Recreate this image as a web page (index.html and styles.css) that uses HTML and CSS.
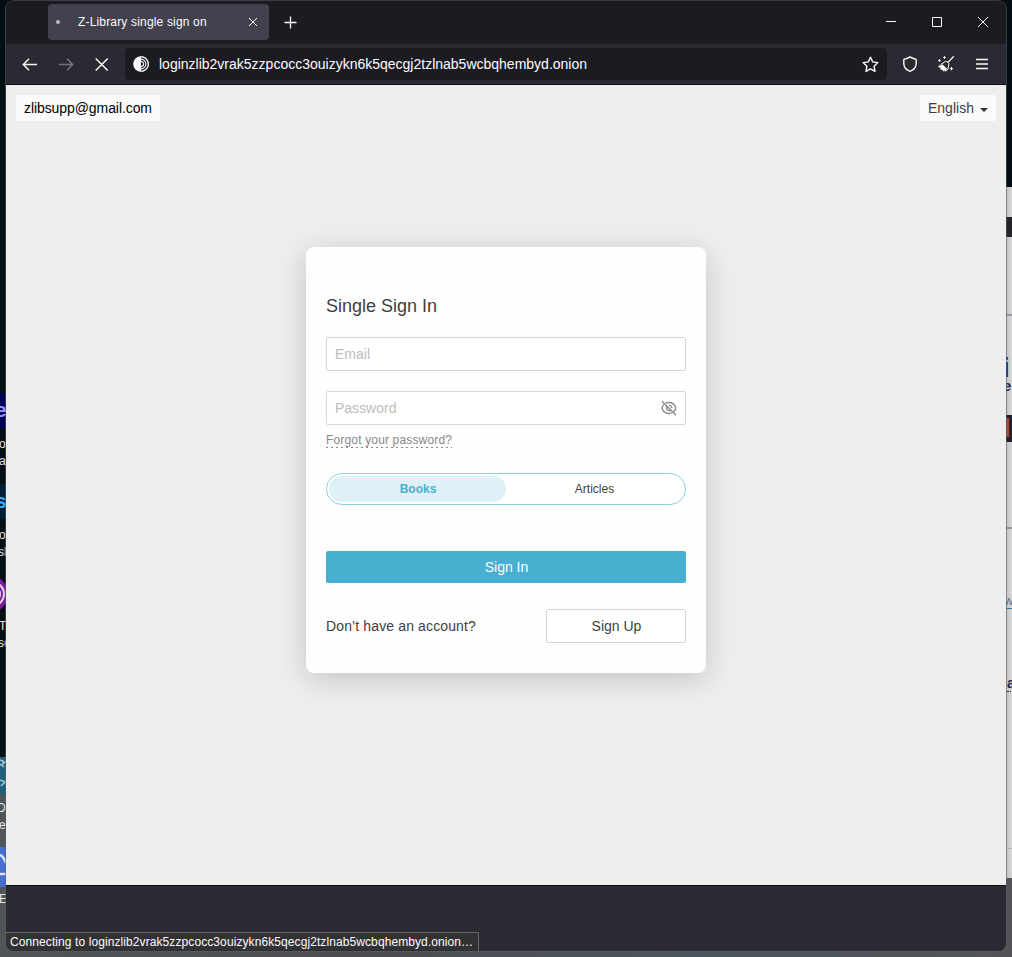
FILE: index.html
```html
<!DOCTYPE html>
<html lang="en">
<head>
<meta charset="utf-8">
<title>Z-Library single sign on</title>
<link rel="stylesheet" href="styles.css">
</head>
<body>
<div class="desktop" aria-hidden="true">
  <div class="wallpaper-low"></div>
  <span class="icon icon-ae">e</span>
  <span class="label label-1">o</span><span class="label label-2">a</span>
  <span class="icon icon-ps">s</span>
  <span class="label label-3">o</span><span class="label label-4">sl</span>
  <svg class="tor" width="6" height="38" viewBox="0 0 6 38"><circle cx="-11" cy="19" r="19" fill="#7b199b" stroke="none"/><circle cx="-8" cy="19" r="12" fill="none" stroke="#e4cfec" stroke-width="2"/><circle cx="-8" cy="19" r="8" fill="none" stroke="#e4cfec" stroke-width="2"/></svg>
  <span class="label label-5">T</span><span class="label label-6">se</span>
  <svg class="teal" width="6" height="38" viewBox="0 0 6 38"><rect width="6" height="38" fill="#21617c" stroke="none"/><path d="M0 3l3 1v3l3-3M0 7l4 3M0 23l5 2M1 29l5-5" fill="none" stroke="#a5cbd5" stroke-width="1.500"/></svg>
  <span class="label label-7">D</span><span class="label label-8">e</span>
  <svg class="blue" width="6" height="40" viewBox="0 0 6 40"><rect width="6" height="40" fill="#466fd3" stroke="none"/><path d="M0 8q3 1 6 8M0 27h6" fill="none" stroke="#dbe3f7" stroke-width="2.500"/></svg>
  <span class="label label-9">E</span>
  <div class="behind">
    <i class="bar"></i><i class="rule rule-1"></i>
    <span class="frag frag-i">i</span><span class="frag frag-e">e</span>
    <span class="dark">d</span><i class="rule rule-2"></i>
    <span class="frag frag-w">w</span><span class="frag frag-a">a</span><i class="rule rule-3"></i>
  </div>
</div>

<div class="window">
  <header class="tabbar">
    <div class="tab"><i class="dot"></i><span class="tab-title">Z-Library single sign on</span>
      <svg width="10" height="10" viewBox="0 0 10 10"><path d="M1 1l8 8M9 1l-8 8"/></svg>
    </div>
    <svg class="plus" width="13" height="13" viewBox="0 0 13 13"><path d="M6.500 .5v12M.5 6.500h12"/></svg>
    <div class="controls">
      <svg width="10" height="10" viewBox="0 0 10 10"><path d="M0 4.500h10" stroke-width="1"/></svg>
      <svg width="10" height="10" viewBox="0 0 10 10"><path d="M.5 .5h9v9h-9z"/></svg>
      <svg width="10" height="10" viewBox="0 0 10 10"><path d="M0 0l10 10M10 0L0 10"/></svg>
    </div>
  </header>
  <nav class="toolbar">
    <svg width="16" height="16" viewBox="0 0 16 16"><path d="M15 8.500H1.500M7 2.800L1.300 8.500 7 14.200"/></svg>
    <svg class="disabled" width="16" height="16" viewBox="0 0 16 16"><path d="M1 8.500h13.500M9 2.800l5.700 5.700L9 14.200"/></svg>
    <svg width="16" height="16" viewBox="0 0 16 16"><path d="M1.700 2.500l12 12M13.700 2.500l-12 12"/></svg>
    <div class="urlbar">
      <svg width="16" height="16" viewBox="0 0 16 16"><circle cx="8" cy="8" r="7.800" fill="#fbfbfe" stroke="none"/><path d="M8 .9a7.100 7.100 0 0 1 0 14.200z" fill="#1c1b22" stroke="none"/><path d="M8 .7a7.300 7.300 0 0 1 0 14.600M8 3.100a4.900 4.900 0 0 1 0 9.800M8 5.400a2.600 2.600 0 0 1 0 5.200" stroke-width="1.100"/></svg>
      <span class="url">loginzlib2vrak5zzpcocc3ouizykn6k5qecgj2tzlnab5wcbqhembyd.onion</span>
      <svg class="star" width="17" height="17" viewBox="0 0 17 17"><path d="M8.500 1.200l2.200 4.700 5.100.7-3.700 3.600.9 5.200-4.500-2.500L4 15.400l.9-5.200-3.700-3.600 5.100-.7z" stroke-width="1.400" stroke-linejoin="round"/></svg>
    </div>
    <div class="tools">
      <svg width="16" height="16" viewBox="0 0 16 16"><path d="M8 .9c2 1.400 4 2 6.200 2.500v3.900c0 3.800-2.600 6.700-6.200 8-3.600-1.300-6.200-4.200-6.200-8V3.400C4 2.900 6 2.300 8 .9z" stroke-linejoin="round"/></svg>
      <svg width="16" height="16" viewBox="0 0 16 16"><path d="M15.700.3L10 6.400" stroke-width="1.300"/><path d="M7.300 5.600c1.900-.8 4.200 1.300 3.500 3.500L10 13.200l-2.500 2-.2-1.700-1.800 1.500-.9-2-1.700.5.400-1.900-2.700-.8 2.200-2.300z" stroke-width="1"/><path d="M.5 10.800l4.200-2.400 4.400 4.300-1.600 2.500-.2-1.700L5.500 15l-.9-2-1.700.5.400-1.900z" fill="#fbfbfe" stroke="none"/><path d="M6.500 .2v2.600M5.200 1.500h2.600M1.500 3.200v2.600M.2 4.500h2.600M13.500 11v3.400M11.800 12.700h3.400" stroke-width="1"/></svg>
      <svg width="16" height="16" viewBox="0 0 16 16"><path d="M2 3.500h12M2 8h12M2 12.500h12"/></svg>
    </div>
  </nav>
  <main class="page">
    <div class="topline"><span class="mail">zlibsupp@gmail.com</span><button class="lang"><span>English</span><i class="caret"></i></button></div>
    <section class="card">
      <h1>Single Sign In</h1>
      <div class="field"><input type="text" placeholder="Email" readonly></div>
      <div class="field password"><input type="text" placeholder="Password" readonly>
        <svg width="16" height="16" viewBox="0 0 16 16"><path d="M4.500 3.200A7.600 7.600 0 0 1 8 2.500c3.500 0 5.700 2 6.900 5.500-.5 1.700-1.200 2.900-2.200 3.800M3 4.400C2 5.300 1.400 6.500 1 8c1 3.500 3.400 5.500 7 5.500 1.200 0 2.300-.2 3.200-.7M6 6.200a2.800 2.800 0 0 0 3.900 3.900M7.800 5.200A2.900 2.900 0 0 1 10.800 8M1 1.200l14 14M7 7l2 2"/></svg></div>
      <a class="forgot">Forgot your password?</a>
      <div class="switch"><span class="active">Books</span><span>Articles</span></div>
      <button class="signin">Sign In</button>
      <div class="bottom"><span class="question">Don’t have an account?</span><button class="signup">Sign Up</button></div>
    </section>
  </main>
  <footer class="footer"><span class="status">Connecting to loginzlib2vrak5zzpcocc3ouizykn6k5qecgj2tzlnab5wcbqhembyd.onion…</span></footer>
</div>
</body>
</html>
```
FILE: styles.css
```css
* { box-sizing: border-box; }
body { margin: 0; width: 1012px; height: 957px; overflow: hidden; position: relative; background: #050e12; font-family: "Liberation Sans", Arial, sans-serif; }
svg { display: block; flex: none; fill: none; stroke: #fbfbfe; stroke-width: 1.4; }
button { font: inherit; color: inherit; cursor: pointer; }

/* desktop around the window */
.desktop > *, .behind > * { position: absolute; }
.wallpaper-low { left: 0; right: 0; top: 795px; bottom: 0; background: linear-gradient(100deg, #505558, #4b4c51 40%, #4b565e 70%, #535457); }
.label { left: 0; width: 6px; overflow: hidden; color: #e8e8e8; font-size: 12px; line-height: 14px; text-indent: -1px; }
.label-1 { top: 437px; } .label-2 { top: 454px; } .label-3 { top: 528px; } .label-4 { top: 545px; text-indent: -2px; }
.label-5 { top: 619px; } .label-6 { top: 636px; text-indent: -2px; } .label-7 { top: 801px; text-indent: -3px; } .label-8 { top: 818px; } .label-9 { top: 892px; text-indent: -1px; }
.icon { left: 0; width: 6px; height: 35px; overflow: hidden; font-weight: bold; font-size: 21px; line-height: 33px; text-indent: -5px; }
.icon-ae { top: 393px; background: #00005b; color: #9999ff; }
.icon-ps { top: 484px; background: #001e36; color: #31a8ff; }
.tor { left: 0; top: 575px; } .teal { left: 0; top: 757px; } .blue { left: 0; top: 847px; }
.behind { left: 1006px; top: 187px; width: 6px; height: 691px; overflow: hidden; background: linear-gradient(90deg, #c0c0c0, #dadada); }
.bar { left: 0; top: 30px; width: 6px; height: 20px; background: #242529; }
.rule { left: 0; width: 6px; height: 2px; background: #9599a3; }
.rule-1 { top: 127px; } .rule-2 { top: 340px; } .rule-3 { top: 661px; height: 1px; background: #b5b5b5; }
.frag { color: #20294a; font-weight: bold; }
.frag-i { left: -4px; top: 170px; font-size: 28px; line-height: 22px; height: 22px; color: #1a2386; }
.frag-e { left: -3px; top: 193px; font-size: 15px; line-height: 12px; }
.dark { left: 0; top: 228px; width: 6px; height: 27px; overflow: hidden; background: #20222b; color: #b34a38; font-size: 26px; line-height: 27px; text-indent: -10px; }
.frag-w { left: -2px; top: 407px; font-weight: normal; font-size: 13px; line-height: 14px; color: #557287; border-bottom: 1px solid #397693; }
.frag-a { left: 1px; top: 489px; font-size: 14px; line-height: 15px; border-bottom: 1px dotted #222; }

/* browser window */
.window { position: relative; width: 1000px; height: 950px; margin: 1px 6px 0; display: flex; flex-direction: column; overflow: hidden; border-radius: 8px; background: #2b2a33; box-shadow: 0 0 0 1px rgba(85, 95, 98, .6); }
.tabbar { height: 43px; flex: none; display: flex; align-items: flex-start; padding: 3px 18px 0 42px; background: #1c1b22; }
.tab { width: 221px; height: 36px; display: flex; align-items: center; padding: 0 11px 0 8px; border-radius: 4px; background: #42414d; color: #fbfbfe; font-size: 12px; }
.tab svg { margin-left: auto; stroke-width: 1; }
.dot { width: 4px; height: 4px; margin-right: 18px; border-radius: 50%; background: #bdbdc5; }
.tab-title { letter-spacing: .17px; white-space: nowrap; }
.plus { margin: 12px 0 0 15px; stroke-width: 1.3; }
.controls { display: flex; gap: 36px; margin: 13px 0 0 auto; }
.controls svg { stroke-width: 1; }
.toolbar { height: 41px; flex: none; display: flex; align-items: center; gap: 20px; padding: 0 16px; border-bottom: 1px solid #0c0c0d; }
.toolbar > .disabled { stroke: #77767e; }
.urlbar { width: 762px; height: 32px; display: flex; align-items: center; margin-left: -5px; padding: 0 8px; border-radius: 4px; background: #1c1b22; color: #fbfbfe; }
.url { margin-left: 10px; font-size: 14px; white-space: nowrap; }
.star { margin-left: auto; }
.tools { display: flex; gap: 20px; margin-left: -5px; }
.page { height: 800px; flex: none; background: #eee; color: #404040; font-size: 14px; }
.topline { display: flex; justify-content: space-between; padding: 10px; }
.mail, .lang { height: 26px; display: flex; align-items: center; padding: 0 8px; border: 0; background: #fafafa; line-height: 16px; }
.mail { width: 144px; color: #000; letter-spacing: -.08px; }
.lang { width: 76px; }
.caret { margin: 4px 0 0 auto; border: 4px solid transparent; border-top-color: #333; border-bottom: 0; }
.card { width: 400px; height: 426px; margin: 116px 0 0 300px; padding: 49px 20px 0; border-radius: 8px; background: #fefefe; box-shadow: 0 6px 30px rgba(0, 0, 0, .18); }
h1 { margin: 0 0 21px; font-size: 18px; line-height: 20px; font-weight: normal; }
.field { height: 34px; display: flex; align-items: center; padding: 0 8px; border: 1px solid #d5d5d5; border-radius: 2px; background: #fff; }
.password { margin-top: 20px; }
.field input { flex: 1; min-width: 0; padding: 0; border: 0; outline: 0; background: none; font: inherit; }
.field input::placeholder { color: #bdbdbd; opacity: 1; }
.field svg { stroke: #888; stroke-width: 1.3; }
.forgot { display: block; width: 126px; height: 16px; margin-top: 7px; color: #888; font-size: 12px; line-height: 16px; letter-spacing: .16px; white-space: nowrap; background: repeating-linear-gradient(90deg, #888 0 2px, transparent 2px 5px) left bottom / 100% 1px no-repeat; }
.switch { height: 32px; display: grid; grid-template-columns: 177px 1fr; margin-top: 25px; padding: 2px; border: 1px solid #8fcfe2; border-radius: 16px; background: #fff; font-size: 12px; line-height: 26px; text-align: center; }
.active { padding-left: 1px; border-radius: 13px; background: #ddf1f7; color: #49afd0; font-weight: bold; }
.signin { display: block; width: 360px; height: 32px; margin-top: 46px; padding: 0 0 0 1px; border: 0; border-radius: 2px; background: #49afd0; color: #fff; }
.bottom { display: flex; align-items: center; justify-content: space-between; margin-top: 26px; }
.question { letter-spacing: .13px; }
.signup { width: 140px; height: 34px; padding: 0 0 0 1px; border: 1px solid #d5d5d5; border-radius: 2px; background: #fff; }
.footer { flex: 1; display: flex; align-items: flex-end; border-top: 1px solid #0c0c0d; background: #2b2a33; }
.status { width: 473px; height: 19px; padding-left: 4px; border: solid #656469; border-width: 1px 1px 0 0; background: #323234; color: #fbfbfe; font-size: 12px; line-height: 18px; letter-spacing: .09px; white-space: nowrap; }
```
